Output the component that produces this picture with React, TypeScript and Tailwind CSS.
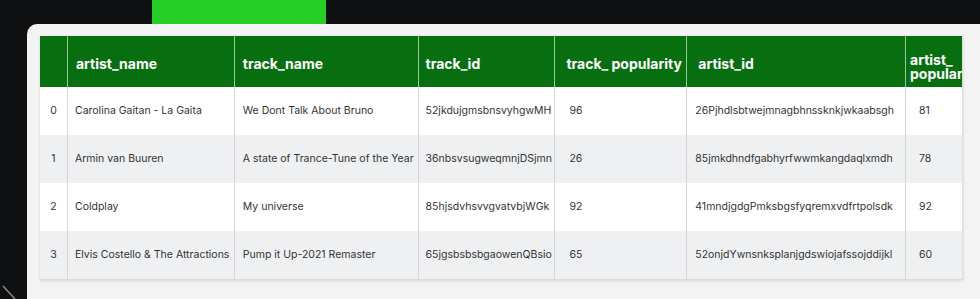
import React from 'react';

const cols = [
  { key: 'idx', label: '', w: 'w-[27px]', head: 'pl-0', body: 'justify-center' },
  { key: 'artist', label: 'artist_name', w: 'w-[167px]', head: 'pl-[8px]', body: 'pl-[7px]' },
  { key: 'track', label: 'track_name', w: 'w-[184px]', head: 'pl-[8px]', body: 'pl-[8px]' },
  { key: 'tid', label: 'track_id', w: 'w-[137px]', head: 'pl-[7px]', body: 'pl-[7px]' },
  { key: 'tpop', label: 'track_ popularity', w: 'w-[132px]', head: 'pl-[11px]', body: 'pl-[14px]' },
  { key: 'aid', label: 'artist_id', w: 'w-[219px]', head: 'pl-[11px]', body: 'pl-[8px]' },
  { key: 'apop', label: '', w: 'w-[57px]', head: 'pl-[4px]', body: 'pl-[13px]' },
];

const rows = [
  ['0', 'Carolina Gaitan - La Gaita', 'We Dont Talk About Bruno', '52jkdujgmsbnsvyhgwMH', '96', '26Pjhdlsbtwejmnagbhnssknkjwkaabsgh', '81'],
  ['1', 'Armin van Buuren', 'A state of Trance-Tune of the Year', '36nbsvsugweqmnjDSjmn', '26', '85jmkdhndfgabhyrfwwmkangdaqlxmdh', '78'],
  ['2', 'Coldplay', 'My universe', '85hjsdvhsvvgvatvbjWGk', '92', '41mndjgdgPmksbgsfyqremxvdfrtpolsdk', '92'],
  ['3', 'Elvis Costello & The Attractions', 'Pump it Up-2021 Remaster', '65jgsbsbsbgaowenQBsio', '65', '52onjdYwnsnksplanjgdswiojafssojddijkl', '60'],
];

export default function App() {
  return (
    <div
      className="relative w-[980px] h-[299px] overflow-hidden bg-[#0e1011]"
      style={{ fontFamily: 'Inter, "Liberation Sans", sans-serif' }}
    >
      <div className="ml-[152px] w-[174px] h-[24px] bg-[#25cf26]" />
      <div className="ml-[27px] w-[980px] h-[300px] rounded-[10px] bg-[#f3f3f4] pt-[12px] pl-[13px]">
        <div className="w-[923px] border-r border-b border-[#dcdcdc] shadow-[0_1px_3px_rgba(0,0,0,0.12)]">
          <div className="flex h-[51px] bg-[#086f10] text-white font-bold text-[14px]">
            {cols.map((c, i) => (
              <div
                key={c.key}
                className={`${c.w} ${c.head} flex items-center pt-[4px] ${i > 0 ? 'border-l border-[#9bc59d]' : ''} overflow-hidden`}
              >
                {c.key === 'apop' ? (
                  <div className="leading-[14px] pt-[6px] whitespace-nowrap">
                    artist_
                    <br />
                    popularity
                  </div>
                ) : (
                  <span className="whitespace-nowrap">{c.label}</span>
                )}
              </div>
            ))}
          </div>
          {rows.map((r, ri) => (
            <div
              key={ri}
              className={`flex h-[48px] text-[10.5px] text-[#333] ${ri % 2 === 1 ? 'bg-[#eff0f2]' : 'bg-white'}`}
            >
              {r.map((cell, ci) => (
                <div
                  key={ci}
                  className={`${cols[ci].w} ${cols[ci].body} flex items-center whitespace-nowrap overflow-hidden ${ci > 0 ? 'border-l border-[#d6d6d6]' : ''}`}
                >
                  {cell}
                </div>
              ))}
            </div>
          ))}
        </div>
      </div>
      <svg className="absolute left-0 bottom-0" width="20" height="16" viewBox="0 0 20 16">
        <line x1="3" y1="3" x2="15" y2="16" stroke="#8a8a8a" strokeWidth="1.5" />
      </svg>
    </div>
  );
}
